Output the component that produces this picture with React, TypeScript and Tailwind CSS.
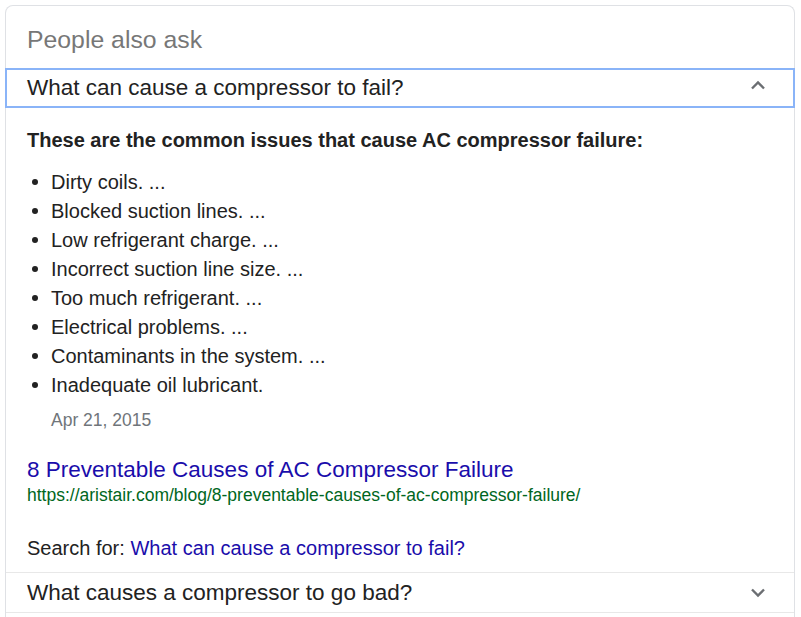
import React from "react";

const issues = [
  "Dirty coils. ...",
  "Blocked suction lines. ...",
  "Low refrigerant charge. ...",
  "Incorrect suction line size. ...",
  "Too much refrigerant. ...",
  "Electrical problems. ...",
  "Contaminants in the system. ...",
  "Inadequate oil lubricant.",
];

const Chevron = ({ up, className }: { up?: boolean; className?: string }) => (
  <svg width="16" height="10" viewBox="0 0 16 10" className={className}>
    <polyline
      points={up ? "2,8.5 8,2.5 14,8.5" : "2,1.5 8,7.5 14,1.5"}
      fill="none"
      stroke="#6b6e72"
      strokeWidth="2.4"
    />
  </svg>
);

const App = () => {
  return (
    <div className="w-[801px] h-[617px] overflow-hidden bg-white font-['Liberation_Sans',Arial,sans-serif] text-[#222]">
      <div className="ml-[5px] mt-[5px] w-[790px] border border-b-0 border-[#dfe1e5] rounded-t-lg">
        {/* Header */}
        <div className="h-[62px] pt-[20px] pl-[21px] text-[24.8px] leading-[28px] text-[#777]">
          People also ask
        </div>

        {/* Expanded question */}
        <div className="-mx-px h-[40px] border-2 border-[#8ab4f8] flex items-center justify-between pl-[20px] pr-[27px]">
          <span className="text-[22.5px] leading-[36px]">
            What can cause a compressor to fail?
          </span>
          <Chevron up className="-mt-[7px]" />
        </div>

        {/* Answer */}
        <div className="pl-[21px] pt-[20px] pb-[12px]">
          <div className="text-[20px] leading-[24px] font-bold">
            These are the common issues that cause AC compressor failure:
          </div>
          <ul className="mt-[15px]">
            {issues.map((item) => (
              <li key={item} className="flex items-center h-[29px] text-[20px]">
                <span className="ml-[5px] w-[6px] h-[6px] rounded-full bg-[#222]" />
                <span className="ml-[13px]">{item}</span>
              </li>
            ))}
          </ul>
          <div className="mt-[9px] pl-[24px] text-[17.5px] leading-[24px] text-[#70757a]">
            Apr 21, 2015
          </div>

          <div className="mt-[24px] text-[22.5px] leading-[28px] text-[#1a0dab]">
            8 Preventable Causes of AC Compressor Failure
          </div>
          <div className="text-[17.5px] leading-[22px] text-[#006621]">
            https://aristair.com/blog/8-preventable-causes-of-ac-compressor-failure/
          </div>

          <div className="mt-[30px] text-[20px] leading-[24px]">
            Search for:{" "}
            <span className="text-[#1a0dab]">What can cause a compressor to fail?</span>
          </div>
        </div>

        {/* Collapsed question */}
        <div className="border-t border-b border-[#e8e8e8] h-[41px] flex items-center justify-between pl-[21px] pr-[28px]">
          <span className="text-[22.5px] leading-[39px]">
            What causes a compressor to go bad?
          </span>
          <Chevron />
        </div>
        <div className="h-[20px]" />
      </div>
    </div>
  );
};

export default App;
